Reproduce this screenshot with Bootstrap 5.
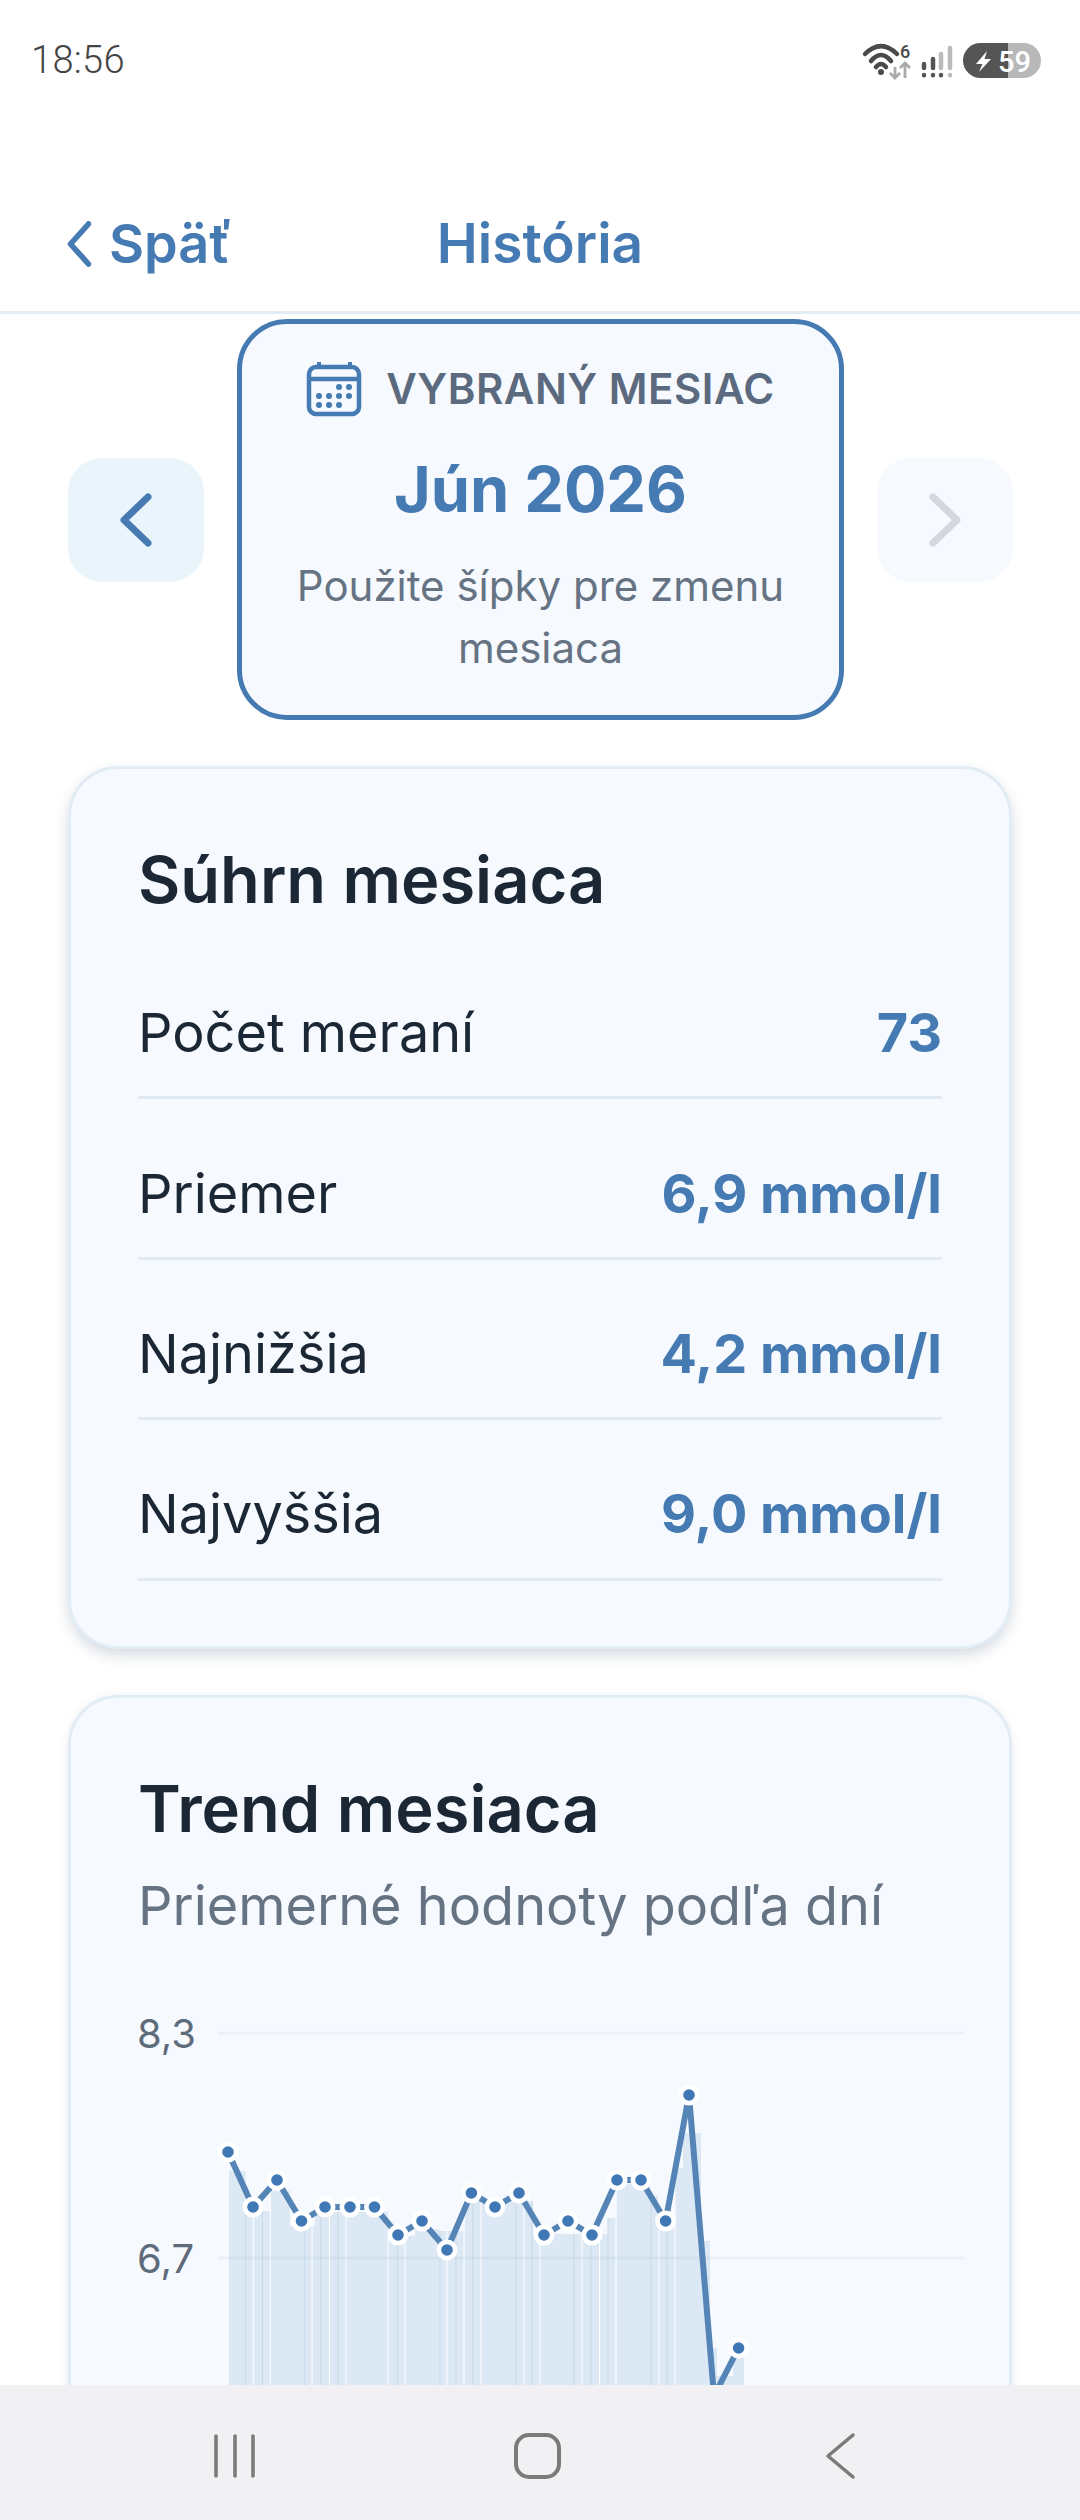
<!DOCTYPE html>
<html lang="sk"><head><meta charset="utf-8">
<link href="https://cdn.jsdelivr.net/npm/bootstrap@5.3.0/dist/css/bootstrap.min.css" rel="stylesheet">
<style>
html,body{margin:0;background:#fff}
body{font-family:Inter,"Noto Sans",sans-serif;width:1080px;height:2520px;overflow:hidden}
.phone{height:2520px}
.stbar{flex:none;height:120px;padding:0 32px 0 31px;color:#444}
.clock{font-family:Roboto,sans-serif;font-weight:300;font-size:38px;letter-spacing:.3px}
.stico{display:block;overflow:visible;margin-right:-2px}
.stnum{font-family:Roboto,sans-serif;font-weight:500}
.topbar{flex:none;height:194px;padding:0 65px 27px;border-bottom:3px solid #e2ecf4;position:relative}
.backlnk{color:#457ab2;font-size:54px;font-weight:600;gap:16px}
.ttl{color:#457ab2;font-size:55px;font-weight:600;position:absolute;left:0;right:0;bottom:27px;text-align:center}
.scroll{flex:1 1 0;min-height:0;overflow:hidden}
.picker{padding:5px 67px 46px 68px}
.arrowbtn{flex:none;width:136px;height:124px;border-radius:34px;background:#eaf4fb;border:0;padding:0}
.arrowbtn.off{background:#f6faff}
.monthbox{flex:none;width:607px;height:401px;border:5px solid #457ab2;border-radius:50px;background:#f6faff;padding-top:37px}
.lab{font-size:42px;font-weight:600;color:#5b6a7e;gap:24px;line-height:54px;letter-spacing:.5px}
.mon{font-size:63px;font-weight:700;color:#457ab2;line-height:80px;margin-top:32px}
.hint{font-size:42px;color:#667383;line-height:62px;margin-top:26px;padding:0 30px}
.pane{margin:0 68px;border:3px solid #e2ecf5;border-radius:50px;background:#f6faff;box-shadow:0 6px 14px rgba(70,90,120,.22);padding:0 67px}
.pane1{height:883px;padding-top:71px}
.pane2{margin-top:46px;padding-top:71px;height:900px;box-shadow:0 2px 8px rgba(70,90,120,.12)}
.h2t{font-size:65px;font-weight:600;color:#1b2735;line-height:80px}
.rows{margin-top:19px;--bs-list-group-bg:transparent}
.rowi{display:flex;justify-content:space-between;align-items:center;height:160.4px;padding:30px 0 0;background:transparent;border:0;border-bottom:3px solid #e1eaf2;font-size:54px;color:#1b2735;border-radius:0!important}
.rowi b{color:#457ab2;font-weight:700;font-size:54px}
.sub2{font-size:54px;color:#667383;line-height:68px;margin-top:23px}
.chartsvg{display:block;margin:21px 0 0 -70px}
.axis{font-family:Inter,sans-serif;font-size:40px;fill:#5e6b7b}
.navb{height:135px;background:#f1f1f3;flex:none}
</style></head>
<body>
<div class="phone d-flex flex-column">
 <div class="stbar d-flex justify-content-between align-items-center">
  <span class="clock">18:56</span>
  <svg class="stico" width="190" height="40" viewBox="0 0 190 40">
   <g fill="none" stroke="#4a4a4a" stroke-width="4.500" stroke-linecap="round">
    <path d="M5 14Q21 -2 37 14"/><path d="M11 21Q21 9 31 21"/><path d="M16 27Q21 21 26 27"/></g>
   <circle cx="21" cy="32" r="3" fill="#4a4a4a"/>
   <text x="40" y="18" class="stnum" font-size="18" font-weight="700" fill="#4a4a4a">6</text>
   <g fill="none" stroke="#aaa" stroke-width="2.800"><path d="M35 27V38M30 33L35 38L40 33"/><path d="M45 38V23M40 28L45 23L50 28"/></g>
   <g stroke-width="4.500" stroke-linecap="round">
    <path d="M64 24V28M73 19V28" stroke="#555"/><path d="M81 14V28M90 8V28" stroke="#bbb"/>
    <path d="M64 35V35.200M73 35V35.200M81 35V35.200" stroke="#555"/><path d="M90 35V35.200" stroke="#bbb"/></g>
   <path d="M120.500 3H148V38H120.500A17.500 17.500 0 0 1 120.500 3Z" fill="#555"/>
   <path d="M148 3H163.500A17.500 17.500 0 0 1 163.500 38H148Z" fill="#b8b8b8"/>
   <path d="M127 11L116 24H122.500L119 32L131 19H124.500Z" fill="#fff"/>
   <text x="138" y="32" class="stnum" font-size="29" font-weight="400" fill="#fff">59</text>
  </svg>
 </div>
 <div class="topbar d-flex align-items-end">
  <a class="backlnk d-flex align-items-center text-decoration-none">
   <svg width="28" height="46" viewBox="0 0 28 46"><path d="M25 3L5 23L25 43" transform="matrix(.9 0 0 1 1 0)" fill="none" stroke="#457ab2" stroke-width="6" stroke-linecap="round" stroke-linejoin="round"/></svg>
   <span>Späť</span></a>
  <div class="ttl">História</div>
 </div>
 <div class="scroll">
  <div class="picker d-flex justify-content-between align-items-center">
   <button class="arrowbtn d-flex align-items-center justify-content-center"><svg width="34" height="54" viewBox="0 0 34 54"><path d="M29 4L5 27L29 50" fill="none" stroke="#457ab2" stroke-width="7" stroke-linecap="round" stroke-linejoin="round"/></svg></button>
   <div class="monthbox text-center">
    <div class="lab d-flex justify-content-center align-items-center">
     <svg width="56" height="56" viewBox="0 0 56 56"><rect x="3" y="6" width="50" height="47" rx="7" fill="none" stroke="#457ab2" stroke-width="4.500"/><path d="M3 18H53" stroke="#457ab2" stroke-width="4.500"/><path d="M13 1V6M44 1V6" stroke="#457ab2" stroke-width="4"/><g fill="#457ab2"><circle cx="33" cy="26" r="3"/><circle cx="43" cy="26" r="3"/><circle cx="13" cy="35" r="3"/><circle cx="23" cy="35" r="3"/><circle cx="33" cy="35" r="3"/><circle cx="43" cy="35" r="3"/><circle cx="13" cy="44" r="3"/><circle cx="23" cy="44" r="3"/><circle cx="33" cy="44" r="3"/></g></svg>
     <span>VYBRANÝ MESIAC</span></div>
    <div class="mon">Jún 2026</div>
    <div class="hint">Použite šípky pre zmenu mesiaca</div>
   </div>
   <button class="arrowbtn off d-flex align-items-center justify-content-center"><svg width="34" height="54" viewBox="0 0 34 54"><path d="M5 4L29 27L5 50" fill="none" stroke="#d3d8de" stroke-width="7" stroke-linecap="round" stroke-linejoin="round"/></svg></button>
  </div>
  <section class="pane pane1 overflow-hidden">
   <div class="h2t">Súhrn mesiaca</div>
   <ul class="list-group rows">
    <li class="list-group-item rowi"><span>Počet meraní</span><b>73</b></li>
    <li class="list-group-item rowi"><span>Priemer</span><b>6,9 mmol/l</b></li>
    <li class="list-group-item rowi"><span>Najnižšia</span><b>4,2 mmol/l</b></li>
    <li class="list-group-item rowi"><span>Najvyššia</span><b>9,0 mmol/l</b></li>
   </ul>
  </section>
  <section class="pane pane2">
   <div class="h2t">Trend mesiaca</div>
   <div class="sub2">Priemerné hodnoty podľa dní</div>
   <svg id="chart" class="chartsvg" width="944" height="560" viewBox="68 1960 944 560"></svg>
  </section>
 </div>
 <div class="navb d-flex justify-content-center position-relative">
  <svg width="1080" height="135" viewBox="0 2385 1080 135" fill="none" stroke="#7a7a7a" stroke-linecap="round">
   <path d="M216 2436V2476M235 2436V2476M253 2436V2476" stroke-width="3.500"/>
   <rect x="516" y="2435" width="43" height="42" rx="13" stroke-width="4"/>
   <path d="M853 2435L828 2456L853 2477" stroke-width="3.500" stroke-linejoin="round"/>
  </svg>
 </div>
</div>
<script>
const xs=[228,253,277,301.5,325,350,374.5,398,422,447,471.4,495,519,544,568,592,617,641,665.6,689,714,738.6];
const ys=[2151,2206,2179,2220,2206,2206,2206,2234,2220,2249,2192,2206,2192,2234,2220,2234,2179,2179,2220,2094,2395,2347];
const tops=[[229,2170],[245.5,2210],[270,2190],[290,2225],[315,2211],[388,2235],[415,2228],[439,2230],[465,2200],[533,2233],[608,2217],[617,2183],[650,2195],[658,2217],[675,2167],[683,2132],[701,2240],[710,2347],[717,2375],[733,2357],[744,2520]];
let bar='M229 2520';tops.forEach((t,i)=>{bar+=` L${t[0]} ${t[1]}`;const nx=tops[i+1];if(nx)bar+=` L${nx[0]} ${t[1]}`;});bar+=' Z';
const topAt=x=>tops.filter(t=>t[0]<=x).pop()[1];
const dark=[245.5,262.5,304.7,321,338,397.5,440,456,473,516,532,574,591,608,651,667];
const white=[253.3,270.3,312,329.5,346,388,405,447,464,481,524,540,582,599.5,616,659,675];
let h=`<path d="${bar}" fill="#dce8f4"/>`;
dark.forEach(x=>h+=`<path d="M${x} ${topAt(x)}V2520" stroke="#c9d9e9" stroke-width="1"/>`);
white.forEach(x=>h+=`<path d="M${x} ${topAt(x)}V2520" stroke="#fff" stroke-width="1"/>`);
h+=`<path d="M218 2032H965M218 2257H965" stroke="#3e6a94" stroke-opacity=".06" stroke-width="3"/>`;
h+=`<text class="axis" x="137" y="2047">8,3</text><text class="axis" x="137" y="2272">6,7</text>`;
h+=`<polyline points="${xs.map((x,i)=>x+','+ys[i]).join(' ')}" fill="none" stroke="#5585b6" stroke-width="6"/>`;
xs.forEach((x,i)=>{h+=`<circle cx="${x}" cy="${ys[i]}" r="10.500" fill="#fff"/><circle cx="${x}" cy="${ys[i]}" r="5.800" fill="#3f78b5"/>`});
document.getElementById('chart').innerHTML=h;
</script>
</body></html>
